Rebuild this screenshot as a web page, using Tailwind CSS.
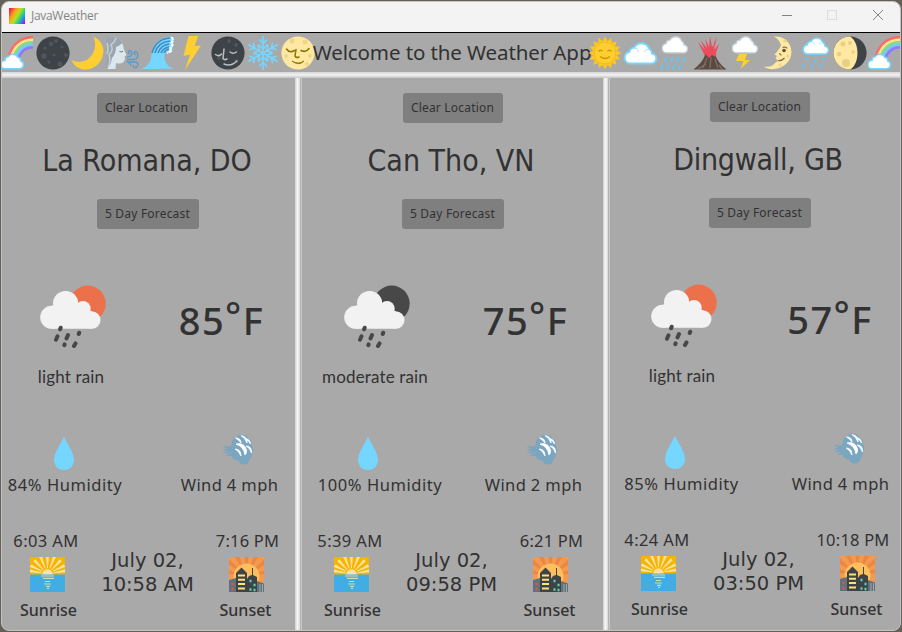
<!DOCTYPE html>
<html lang="en">
<head>
<meta charset="utf-8">
<title>JavaWeather</title>
<script src="https://cdn.jsdelivr.net/npm/@tailwindcss/browser@4"></script>
</head>
<body class="w-[902px] h-[632px] overflow-hidden bg-[#665f55] text-[#323232] font-['Noto_Sans',sans-serif]">
<svg class="absolute size-0">
  <defs>
    <linearGradient id="gJ" x1="0" y1="0.2" x2="1" y2="0.8"><stop offset="0" stop-color="#f0204c"/><stop offset=".28" stop-color="#f7a51c"/><stop offset=".5" stop-color="#b9e01c"/><stop offset=".7" stop-color="#2bd47a"/><stop offset=".85" stop-color="#2a8ff0"/><stop offset="1" stop-color="#a01cf0"/></linearGradient>
    <clipPath id="sq"><rect width="35" height="35"/></clipPath>
  </defs>
  <symbol id="cloudS" viewBox="0 0 34 24">
    <path d="M7 22.500a5.800 5.800 0 0 1-.6-11.500a5 5 0 0 1 5-4.500A8 8 0 0 1 26 7.500a6 6 0 0 1 3 5a5 5 0 0 1-1.500 10z" fill="#fff" stroke="#75d6ff" stroke-width="2" stroke-linejoin="round"/>
    <path d="M11 7q4 0 5 4M26 8q-4 0-5 3" fill="none" stroke="#a9e4ff" stroke-width="1"/>
  </symbol>
  <symbol id="rainbow" viewBox="0 0 34 34">
    <g fill="none" stroke-width="2.600">
      <path d="M7.300 22Q13 1.400 32 1.400" stroke="#ff6b6b"/><path d="M9.900 22Q15 3.900 32 3.900" stroke="#ffe68a"/>
      <path d="M12.400 22Q17 6.400 32 6.400" stroke="#85dd83"/><path d="M14.800 22Q19 8.800 32 8.800" stroke="#75c9fa"/><path d="M17.200 23Q21 11.200 32 11.200" stroke="#9278ff"/>
    </g>
    <path d="M4 32.800a4 4 0 0 1 0-8.300q0-3.500 3.200-3.800a5.500 5.500 0 0 1 9.600.6q3.500 1 2.800 3.700a4 4 0 0 1-1 7.800z" fill="#fff" stroke="#75d6ff" stroke-width="1.500"/>
  </symbol>
  <symbol id="newmoon" viewBox="0 0 34 34"><circle cx="17" cy="17" r="16.600" fill="#3e4347"/>
    <g fill="#50575c"><circle cx="8" cy="20" r="2.700"/><circle cx="15" cy="8" r="2.200"/><circle cx="20" cy="5" r="2"/><circle cx="26" cy="11" r="1.500"/><circle cx="13" cy="26" r="1.600"/><circle cx="24" cy="28" r="2.500"/><circle cx="9" cy="12" r="1.600"/><circle cx="30" cy="19" r="2"/><circle cx="18" cy="19" r="1.300"/></g></symbol>
  <symbol id="crescent" viewBox="0 0 34 34"><path d="M22.500.500A17.800 17.800 0 0 1 32.500 14C32.500 34 8 41 .500 24C14 31 29 18 22.500.500z" fill="#ffce31"/></symbol>
  <symbol id="blow" viewBox="0 0 34 34">
    <path d="M0 1.500Q11-2 16 6Q17.500 11 18 14L20.500 19L18.500 20.500L19 23L17.700 26Q14 28.500 10 27L9.500 33H0z" fill="#dce6ed"/>
    <path d="M0 1Q12-2 16.500 7Q13 10 10 11Q10 18 6 22Q5 29 1 33H0z" fill="#9aa5ae"/><path d="M2 31Q5 25 3 19Q8 14 5 9Q9 6 10 2M1 18Q3 13 1 7" fill="none" stroke="#c4ced5" stroke-width="1.500"/>
    <path d="M13.500 15.500q2 1 3.500-.3" fill="none" stroke="#64727c"/>
    <path d="M21 23.500H27Q32 24 31.800 18Q31 14.500 28.500 16Q27.500 18.500 30 18.500M21 21Q27 21 25.500 16Q23 13 22 16Q22 18 24 17.500M22 26H29Q34 27 31 31Q27 33 27.500 29M20.500 25.500Q24 26 25 30" fill="none" stroke="#5c9cc4" stroke-width="1.400"/>
  </symbol>
  <symbol id="wave" viewBox="0 0 34 34">
    <path d="M.500 33Q10 29 10.500 19Q12 2 31 .300L33 3L31 15Q21 16 24 24Q26 31 33 32.800z" fill="#75d6ff"/>
    <path d="M11 17Q15 3 29 2M14 17Q17 6 29 5M17 17Q20 9 28 8M20 17Q22 12 28 11M23 17Q24 14 28 13" fill="none" stroke="#428bc1" stroke-width="1.600"/>
    <path d="M31 1L32 4L30.500 7L31.500 9L29.500 12L30 15L26 17" fill="none" stroke="#fff" stroke-width="2.300" stroke-dasharray="3 .8"/>
    <path d="M.500 33Q6 29 9 32Q14 29 17 33z" fill="#75d6ff"/>
  </symbol>
  <symbol id="bolt" viewBox="0 0 34 34"><path d="M12.500 0L22 0L18.700 10L25 9.500L9 34L14 18.500L7.500 20z" fill="#ffce31"/></symbol>
  <symbol id="newface" viewBox="0 0 34 34"><circle cx="17" cy="17" r="16.600" fill="#3e4347"/><g fill="#50575c"><circle cx="18" cy="5" r="2"/><circle cx="25" cy="9" r="2"/><circle cx="8" cy="22" r="2"/><circle cx="25" cy="25" r="2"/></g>
    <path d="M4.500 18.500q3.500 2.500 6-.5M19 16q3 2.500 6.500 0M13 13L12 22.500q1.500 2 4 .5M13 28q7 3 13-3" fill="none" stroke="#b8c0c6" stroke-width="1.500" stroke-linecap="round"/></symbol>
  <symbol id="snow" viewBox="0 0 34 34"><g fill="none" stroke="#75d6ff" stroke-width="1.600">
    <path id="sa" d="M17 0V34M13 3.500L17 7.500L21 3.500M12.500 8.500L17 13L21.500 8.500M13 30.500L17 26.500L21 30.500M12.500 25.500L17 21L21.500 25.500"/><use href="#sa" transform="rotate(60 17 17)"/><use href="#sa" transform="rotate(120 17 17)"/></g></symbol>
  <symbol id="fullface" viewBox="0 0 34 34"><circle cx="17" cy="17" r="16.600" fill="#ffe8a2"/><g fill="#efd58a"><circle cx="11" cy="5" r="2.500"/><circle cx="24" cy="6" r="2.500"/><circle cx="29" cy="20" r="2"/><circle cx="5" cy="20" r="2"/><circle cx="26" cy="28" r="2"/></g>
    <path d="M5.500 13q3 4.500 8 1.500M20 14.500q5 2.500 8-2M15 13.500L14 20q1.500 2.500 4 1" fill="none" stroke="#8e7400" stroke-width="1.500" stroke-linecap="round"/><path d="M11 25q6 4 12 0q-5 5.500-12 0" fill="#8e7400" stroke="#8e7400" stroke-width=".8"/></symbol>
  <symbol id="sun" viewBox="0 0 34 34"><g fill="#ffc61c"><path id="ry" d="M14 6.500L17 .500L20 6.500zM14 27.500L17 33.500L20 27.500z"/><use href="#ry" transform="rotate(22.500 17 17)"/><use href="#ry" transform="rotate(45 17 17)"/><use href="#ry" transform="rotate(67.500 17 17)"/><use href="#ry" transform="rotate(90 17 17)"/><use href="#ry" transform="rotate(112.500 17 17)"/><use href="#ry" transform="rotate(135 17 17)"/><use href="#ry" transform="rotate(157.500 17 17)"/></g>
    <circle cx="17" cy="17" r="10.800" fill="#ffce31" stroke="#edb316" stroke-width=".6"/><path d="M10.500 15.500q2-2.800 4 0M19.500 15.500q2-2.800 4 0M12 20.500q5 4 10 0" fill="none" stroke="#d19500" stroke-width="1.400"/></symbol>
  <symbol id="cloud" viewBox="0 0 34 34"><use href="#cloudS" x="0" y="5" width="34" height="24"/></symbol>
  <symbol id="gcloud" viewBox="0 0 34 24"><path d="M7 22.500a5.800 5.800 0 0 1-.6-11.500a5 5 0 0 1 5-4.500A8 8 0 0 1 26 7.500a6 6 0 0 1 3 5a5 5 0 0 1-1.500 10z" fill="#fff" stroke="#c5d0d8" stroke-width="1.700"/></symbol>
  <symbol id="raincloud" viewBox="0 0 34 34"><use href="#gcloud" x="3" y="-1.500" width="27" height="20"/><path d="M8.500 22l-1.500 3M14.500 22l-1.500 3M20.500 22l-1.500 3M26.500 22l-1.500 3M4.500 29.500l-1.500 3M10.500 29.500l-1.500 3M16.500 29.500l-1.500 3M22.500 29.500l-1.500 3" stroke="#62c6f4" stroke-width="2" stroke-linecap="round"/></symbol>
  <symbol id="volcano" viewBox="0 0 34 34"><path d="M12 20L5 6L12 14L7.500 4L14 12L12 2L16 11L17 0L19 11L24 1L21 13L26 8L22 20z" fill="#ed4c5c"/><path d="M13 10L9 3M15.500 9L14.500 2M20 10L21 2M22 13L26 5" stroke="#a9a9a9" stroke-width=".8"/><path d="M12.500 18L15 19.500L18 17L22 18Q24 26 33.500 33.500H.500Q10 26 12.500 18z" fill="#594a42"/><path d="M14 22L10 32M18 21L17 32M22 23L25 32M13 28L5 33M26 29L29 33" stroke="#836f60" stroke-width="1.300"/><path d="M11 17Q17 14 23 17L22 21L19 19L16 22L13 19z" fill="#ed4c5c"/></symbol>
  <symbol id="thunder" viewBox="0 0 34 34"><use href="#gcloud" x="3" y="-1.500" width="27" height="20"/><path d="M11 18h8l-2 6h5L12.500 33l3-8H8z" fill="#ffce31"/></symbol>
  <symbol id="moonface" viewBox="0 0 34 34"><path d="M11 .500C26-1 34 16 24 27C17 34 6 35 1 30.500Q8 32 12 27L15 25L12.500 22L14 20L11.500 18.500Q17 13 18 9Q16 3 11 .500z" fill="#ffe8a2"/><path d="M15 24.500Q19 25 21.500 22M19.500 11.500q4-1 4.500 1M16 18q2-.5 2 1.500" fill="none" stroke="#89664c" stroke-width="1.200"/><circle cx="21" cy="14.500" r="1.800" fill="#664e27"/><g fill="#efd58a"><circle cx="22" cy="5" r="1.700"/><circle cx="25" cy="20" r="1.600"/><circle cx="17" cy="29" r="1.700"/></g></symbol>
  <symbol id="snowcloud" viewBox="0 0 34 34"><use href="#cloudS" x="4" y="-.3" width="27" height="20"/><path id="fl" d="M9 21.500v3.400M7.500 22.300l3 1.700M10.500 22.300l-3 1.700" stroke="#62c6f4"/><use href="#fl" x="8" y="2"/><use href="#fl" x="17"/><use href="#fl" x="-4" y="6.500"/><use href="#fl" x="5" y="7.500"/><use href="#fl" x="14" y="6.500"/></symbol>
  <symbol id="gibbous" viewBox="0 0 34 34"><circle cx="17" cy="17" r="16.600" fill="#3e4347"/><path d="M17 .400C27 6 27 28 17 33.600A16.600 16.600 0 0 1 17 .400z" fill="#ffe8a2"/><g fill="#e8cf88"><circle cx="10" cy="8" r="2.500"/><circle cx="17" cy="7" r="2"/><circle cx="6" cy="18" r="2.200"/><circle cx="13" cy="27" r="4"/><circle cx="20" cy="16" r="1.700"/></g></symbol>

  <symbol id="wx" viewBox="0 0 66 63"><circle cx="47.700" cy="18.600" r="18" fill="currentColor"/>
    <g fill="#f2f2f2"><circle cx="11.700" cy="32.300" r="11.500"/><circle cx="25.600" cy="18.500" r="12.600"/><circle cx="43" cy="23.700" r="7.700"/><circle cx="51.700" cy="35" r="8.800"/><path d="M11.700 20.800L25 18L43 22L51.700 26.200V43.800H11.700z"/></g>
    <path d="M20.700 42.700l-.6 1.600M17.500 51.300L16 54.700M28 50L26.500 53.400M39.200 47.700l-.5 1.300M24.600 59.400l-.3.700M35.500 58.400L34 61" stroke="#484848" stroke-width="4" stroke-linecap="round"/></symbol>
  <symbol id="drop" viewBox="0 0 20 33"><path d="M10 0C13 6 20 16 20 23.500C20 29 15.500 33 10 33S0 29 0 23.500C0 16 7 6 10 0z" fill="#75d6ff"/></symbol>
  <symbol id="puff" viewBox="0 0 32 32"><path d="M0 12L8 12.500L10 10Q9 5 14 3.500Q17-1 22 1Q26 1 26 4.500Q31 6 29.500 11Q33 15 29.500 20Q30 24 27.500 25Q27 31 22 30.500Q18 31 16 26.500Q12 27 9.500 22L3 22L8 19.500L1 19L6 17L0 16L5 14.500z" fill="#7ba6c0"/><path d="M13.500 4Q19 4 19 9Q17 6 13.500 4M19 1.500Q26 3 25 9Q23 4 19 1.500M24 5Q28 5 28.500 10Q27 7 24 5M14 10Q22 8 24.500 16Q25 19 23 21Q22 13 14 10M24 12Q30 12 29.500 19Q28 14 24 12M13 15Q19 15 19 22Q17 17 13 15" fill="#fff" stroke="#fff" stroke-width=".8"/></symbol>
  <symbol id="rise" viewBox="0 0 35 35"><g clip-path="url(#sq)"><rect width="35" height="18" fill="#f4b400"/><g fill="#ffe1a0"><path id="w" d="M17.500 16L16 -2H19z"/><use href="#w" transform="rotate(22 17.500 17)"/><use href="#w" transform="rotate(44 17.500 17)"/><use href="#w" transform="rotate(64 17.500 17)"/><use href="#w" transform="rotate(80 17.500 17)"/><use href="#w" transform="rotate(-22 17.500 17)"/><use href="#w" transform="rotate(-44 17.500 17)"/><use href="#w" transform="rotate(-64 17.500 17)"/><use href="#w" transform="rotate(-80 17.500 17)"/></g><circle cx="17.500" cy="17.500" r="6.300" fill="#f4b400"/><circle cx="17.500" cy="17.500" r="5.300" fill="#ffe1a0"/><rect y="17.500" width="35" height="18" fill="#42ade2"/><path d="M11 19h13M13 21.300h11M15 24.500h5M14 27h7M16 29.300h4M17 31.300h2" stroke="#d9d7a0" stroke-width="1.200"/></g></symbol>
  <symbol id="set" viewBox="0 0 35 35"><g clip-path="url(#sq)"><rect width="35" height="35" fill="#f29a4e"/><g fill="#ec8642"><path id="v" d="M17.500 19L14.500 -12H20.500z"/><use href="#v" transform="rotate(26 17.500 19)"/><use href="#v" transform="rotate(52 17.500 19)"/><use href="#v" transform="rotate(78 17.500 19)"/><use href="#v" transform="rotate(-26 17.500 19)"/><use href="#v" transform="rotate(-52 17.500 19)"/><use href="#v" transform="rotate(-78 17.500 19)"/></g><circle cx="17.500" cy="19.500" r="13" fill="#ffbf5e"/>
    <path d="M0 23L7 21V35H0zM28 24L35 26.500V35H28z" fill="#62727a"/><path d="M31 27v8M33.500 27v8" stroke="#9aa7ad"/><path d="M7 35V16L12.500 10.500L18 16V22L20 19L23 18V11h1V18L28 20V35z" fill="#3e4347"/><path d="M9 18.500h7M9 22.700h7M9 27h7M9 31.500h7" stroke="#ffe17a" stroke-width="2"/><path d="M20.500 24h2M24.500 28h2M20.500 32.500h2M24.500 33h2" stroke="#62d5b4" stroke-width="2.500"/><path d="M2.500 27h2M2.500 32h2" stroke="#ed4c5c" stroke-width="2.500"/></g></symbol>
</svg>

<div class="mt-px ml-px w-[900px] h-[630px] rounded-lg overflow-hidden bg-[#a9a9a9] border border-[#c4c4c4] flex flex-col">
  <div class="h-[30px] shrink-0 bg-[#f3f3f3] flex items-center pl-[7px]">
    <svg class="size-4 -mt-0.5" viewBox="0 0 16 16"><rect width="16" height="16" fill="url(#gJ)"/></svg>
    <span class="ml-[6px] -mt-0.5 text-[12px] tracking-[-0.3px] text-[#858585] font-['Open_Sans',sans-serif]">JavaWeather</span>
    <svg class="ml-auto mr-[14px] w-[104px] h-3 -mt-[4px]" viewBox="0 0 104 12" fill="none"><path d="M0 6.500H10" stroke="#858585"/><rect x="45.500" y="1.500" width="9" height="9" stroke="#dcdcdc"/><path d="M91 1L101 11M101 1L91 11" stroke="#858585"/></svg>
  </div>
  <div class="h-px shrink-0 bg-black"></div>
  <header class="h-[39px] shrink-0 flex items-center -ml-[2px] w-[902px]">
    <div class="flex shrink-0 w-[315px] justify-around" id="left"></div>
    <h1 class="w-[272px] shrink-0 -mt-0.5 flex justify-center whitespace-nowrap text-[20.5px] leading-6 tracking-[-0.1px] pl-[2px]">Welcome to the Weather App</h1>
    <div class="flex shrink-0 w-[315px] justify-around" id="right"></div>
  </header>
  <div class="h-[6px] shrink-0 bg-linear-to-b from-[#d6d6d6] via-[#f2f2f2] to-[#c4c4c4]"></div>
  <main class="flex flex-1" id="cols"></main>
</div>

<script>
const icon = n => `<svg class="w-[34px] h-[34px]"><use href="#${n}"/></svg>`;
document.getElementById('left').innerHTML = ['rainbow','newmoon','crescent','blow','wave','bolt','newface','snow','fullface'].map(icon).join('');
document.getElementById('right').innerHTML = ['sun','cloud','raincloud','volcano','thunder','moonface','snowcloud','gibbous','rainbow'].map(icon).join('');
const divider = '<div class="w-[8px] shrink-0 flex"><div class="w-[5px] bg-linear-to-r from-[#d0d0d0] via-[#f6f6f6] to-[#d8d8d8]"></div><div class="w-px bg-[#b4b4b4]"></div><div class="w-px bg-[#c8c8c8]"></div></div>';
const data = [
 {box:'w-[293px]', pad:'pl-0 pt-[15px]', clear:'', fore:'ml-[2px]', track:'', city:'La Romana, DO', disc:'text-[#ec7049]', temp:'85', tpad:'pr-[1px]', desc:'light rain', hum:'84% Humidity', hpad:'', wind:'Wind 4 mph', a:'6:03 AM', b:'7:16 PM', bpad:'pr-px', t:'10:58 AM'},
 {box:'w-[300px]', pad:'pl-[3px] pt-[15px]', clear:'ml-[4px]', fore:'ml-[4px]', track:'', city:'Can Tho, VN', disc:'text-[#484849]', temp:'75', tpad:'pr-[1px]', desc:'moderate rain', hum:'100% Humidity', hpad:'pl-[22px]', wind:'Wind 2 mph', a:'5:39 AM', b:'6:21 PM', bpad:'pr-px', t:'09:58 PM'},
 {box:'w-[290px]', pad:'pl-[2px] pt-[14px]', clear:'ml-[4px]', fore:'ml-[4px]', track:'tracking-[-0.25px]', city:'Dingwall, GB', disc:'text-[#ec7049]', temp:'57', tpad:'pr-[6px]', desc:'light rain', hum:'85% Humidity', hpad:'pl-[11px]', wind:'Wind 4 mph', a:'4:24 AM', b:'10:18 PM', bpad:'pr-[12px]', t:'03:50 PM'}
];
document.getElementById('cols').innerHTML = data.map(d => `
 <section class="${d.box} ${d.pad} shrink-0">
  <div class="w-[290px] flex flex-col items-center whitespace-nowrap">
   <button class="h-[30px] w-[100px] ${d.clear} pr-px rounded-[3px] bg-[#7f7f7f] text-[12px] tracking-[0.2px]">Clear Location</button>
   <h2 class="h-[76px] pb-0.5 flex items-center text-[30px] ${d.track} font-['DejaVu_Sans_Condensed','DejaVu_Sans',sans-serif]">${d.city}</h2>
   <button class="h-[30px] w-[102px] ${d.fore} pr-px rounded-[3px] bg-[#7f7f7f] text-[12px] tracking-[0.2px]">5 Day Forecast</button>
   <div class="mt-[56px] w-full flex justify-between">
    <div class="w-[138px] flex flex-col items-center">
     <svg class="w-[66px] h-[63px] ml-[4px] ${d.disc}"><use href="#wx"/></svg>
     <div class="mt-[17px] h-6 leading-6 text-[17px] tracking-[0.15px] font-['Lato',sans-serif]">${d.desc}</div>
    </div>
    <div class="w-[140px] h-[70px] ${d.tpad} flex items-center justify-center text-[38px] tracking-[1.4px] font-medium">${d.temp}<span class="relative -top-[5px]">°</span>F</div>
   </div>
   <div class="mt-[48px] w-full flex justify-between">
    <div class="w-[126px] flex flex-col items-center"><svg class="w-5 h-[33px] mr-[3px]"><use href="#drop"/></svg><div class="mt-[3px] ${d.hpad} h-6 leading-6 text-[16.5px] tracking-[0.55px]">${d.hum}</div></div>
    <div class="w-[125px] flex flex-col items-center"><svg class="w-8 h-8 -mt-[3px] mb-[4px] ml-[17px]"><use href="#puff"/></svg><div class="mt-[3px] h-6 leading-6 text-[16.5px] tracking-[0.38px]">${d.wind}</div></div>
   </div>
   <div class="mt-[32px] w-full flex">
    <div class="w-[88px] flex flex-col items-center"><div class="h-6 leading-6 text-[16.5px] tracking-[0.4px]">${d.a}</div><svg class="mt-[4px] w-[35px] h-[35px] ml-[3px]"><use href="#rise"/></svg><div class="mt-[6px] ml-[5px] h-6 leading-6 text-[16px] font-medium">Sunrise</div></div>
    <div class="pt-[20px] pl-px flex-1 flex flex-col items-center text-[19.5px] leading-6 font-['DejaVu_Sans',sans-serif]"><div>July 02,</div><div>${d.t}</div></div>
    <div class="w-[88px] flex flex-col items-center"><div class="h-6 ${d.bpad} leading-6 text-[16.5px] tracking-[0.2px]">${d.b}</div><svg class="mt-[4px] w-[35px] h-[35px] mr-[4px]"><use href="#set"/></svg><div class="mt-[6px] mr-[5px] h-6 leading-6 text-[16px] font-medium">Sunset</div></div>
   </div>
  </div>
 </section>`).join(divider);
</script>
</body>
</html>
